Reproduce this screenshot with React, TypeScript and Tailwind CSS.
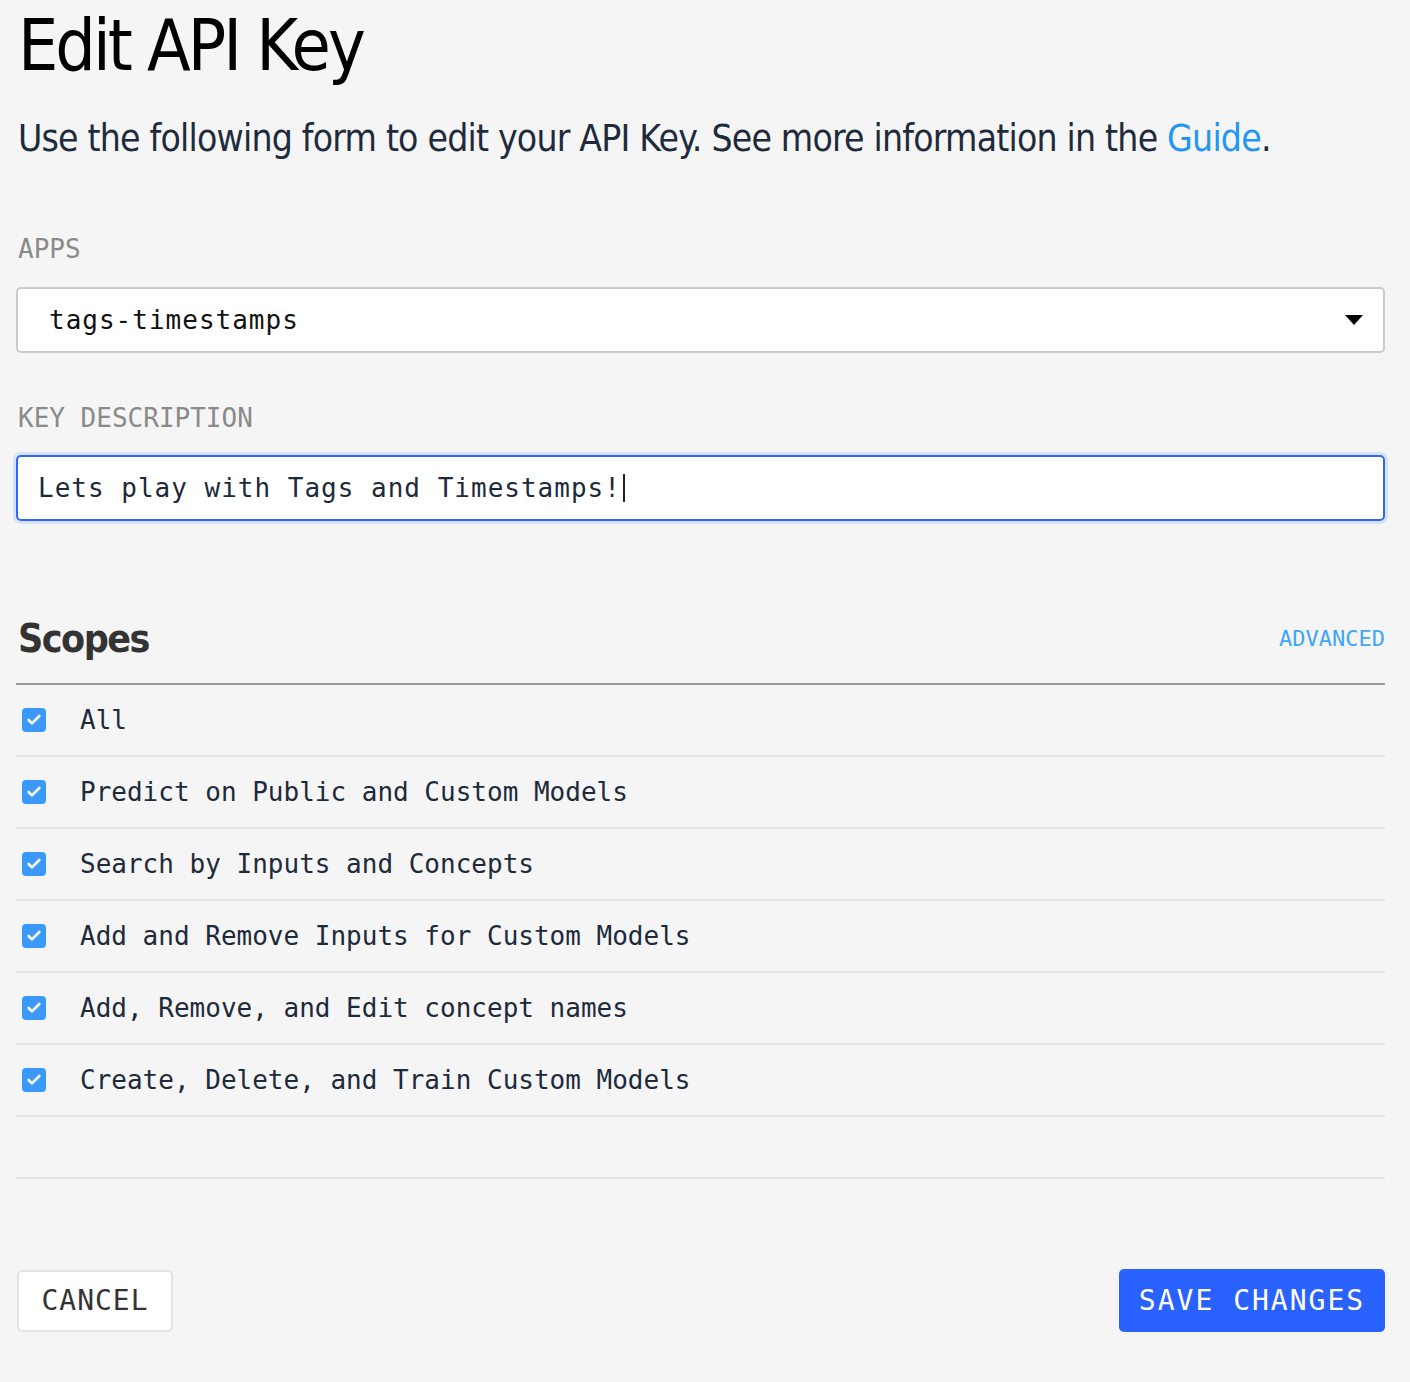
import { Check } from "lucide-react";

const SCOPES = [
  "All",
  "Predict on Public and Custom Models",
  "Search by Inputs and Concepts",
  "Add and Remove Inputs for Custom Models",
  "Add, Remove, and Edit concept names",
  "Create, Delete, and Train Custom Models",
];

const sans = "font-['DejaVu_Sans_Condensed','Liberation_Sans',sans-serif]";
const mono = "font-['DejaVu_Sans_Mono',monospace]";

function ScopeRow({ label }: { label: string }) {
  return (
    <div className="flex h-[72px] items-center border-b-2 border-[#e4e4e4]">
      <span className="ml-[6px] flex h-6 w-6 items-center justify-center rounded-[4px] bg-[#3b99fc]">
        <Check className="h-4 w-4 text-white" strokeWidth={4} />
      </span>
      <span className={`${mono} ml-[34px] text-[26px] leading-8 text-[#1d2a3b]`}>
        {label}
      </span>
    </div>
  );
}

export default function App() {
  return (
    <main className="min-h-screen bg-[#f5f5f5] pl-4 pr-[25px] pb-12">
      <h1 className={`${sans} pt-[10px] pl-[2px] text-[71px] font-light leading-[72px] tracking-[-3px] text-black`}>
        Edit API Key
      </h1>
      <p className={`${sans} mt-[33px] pl-[2px] text-[37px] leading-[48px] tracking-[-0.8px] whitespace-nowrap text-[#1e2b3c]`}>
        Use the following form to edit your API Key. See more information in the{" "}
        <a className="text-[#2196f3]">Guide</a>.
      </p>

      <label className={`${mono} mt-[70px] block pl-[2px] text-[26px] leading-8 text-[#8a8a8a]`}>
        APPS
      </label>
      <div className="mt-[22px] flex h-[66px] items-center justify-between rounded-[5px] border-2 border-[#cbcbcf] bg-white pl-[31px] pr-[20px]">
        <span className={`${mono} text-[26px] tracking-[1px] text-[#111]`}>tags-timestamps</span>
        <svg width="18" height="10" viewBox="0 0 18 10">
          <path d="M0 0h18L9 10z" fill="#000" />
        </svg>
      </div>

      <label className={`${mono} mt-[49px] block pl-[2px] text-[26px] leading-8 text-[#8a8a8a]`}>
        KEY DESCRIPTION
      </label>
      <div className="mt-[21px] flex h-[66px] items-center rounded-[5px] border-2 border-[#2f66ff] bg-white pl-[20px] shadow-[0_0_0_3px_#d7e2fa]">
        <span className={`${mono} text-[26px] tracking-[1px] text-[#1d2a3b]`}>
          Lets play with Tags and Timestamps!
        </span>
        <span className="ml-[2px] h-[28px] w-[2px] bg-[#222]" />
      </div>

      <div className="mt-[95px] flex items-center justify-between border-b-2 border-[#999] pb-[21px] pl-[2px]">
        <h2 className={`${sans} text-[39px] font-bold leading-[46px] tracking-[-1.5px] text-[#333]`}>Scopes</h2>
        <a className={`${mono} text-[22px] leading-7 text-[#42a5f5]`}>ADVANCED</a>
      </div>
      {SCOPES.map((s) => (
        <ScopeRow key={s} label={s} />
      ))}
      <div className="h-[62px] border-b-2 border-[#e4e4e4]" />

      <div className="mt-[90px] flex items-center justify-between">
        <button className={`${mono} ml-[1px] h-[62px] w-[156px] rounded-[5px] border-2 border-[#e3e3e3] bg-white text-[28px] tracking-[1px] text-[#333]`}>
          CANCEL
        </button>
        <button className={`${mono} h-[63px] w-[266px] rounded-[5px] bg-[#2962ff] text-[28px] tracking-[2px] text-white`}>
          SAVE CHANGES
        </button>
      </div>
    </main>
  );
}
